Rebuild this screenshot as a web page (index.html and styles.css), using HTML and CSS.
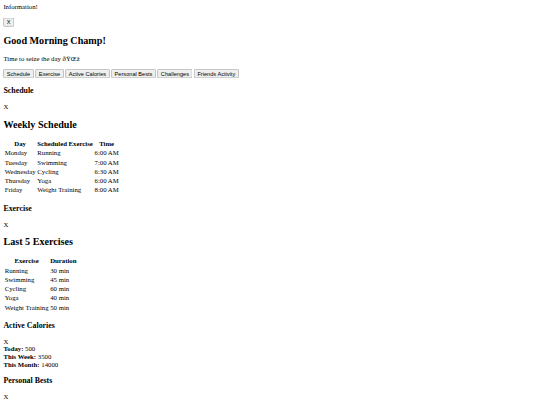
FILE: index.html
```html
<!DOCTYPE html>
<html lang="en">
<head>
  <meta charset="UTF-8">
  <meta name="viewport" content="width=device-width, initial-scale=1.0">
  <title>Fitness Dashboard</title>
  <link rel="stylesheet" href="styles.css">
</head>
<body>
  <div class="page">
    <div class="alert">
      <div>Information!</div>
      <p><button class="close">X</button></p>
    </div>

    <section class="greeting">
      <h1>Good Morning Champ!</h1>
      <p>Time to seize the day ðŸŒž</p>
    </section>

    <div class="tabs">
      <button>Schedule</button>
      <button>Exercise</button>
      <button>Active Calories</button>
      <button>Personal Bests</button>
      <button>Challenges</button>
      <button>Friends Activity</button>
    </div>

    <!-- Schedule -->
    <div class="card">
      <h3>Schedule</h3>
      <div class="close-x">X</div>
      <h2>Weekly Schedule</h2>
      <table>
        <tr><th>Day</th><th>Scheduled Exercise</th><th>Time</th></tr>
        <tr><td>Monday</td><td>Running</td><td>6:00 AM</td></tr>
        <tr><td>Tuesday</td><td>Swimming</td><td>7:00 AM</td></tr>
        <tr><td>Wednesday</td><td>Cycling</td><td>6:30 AM</td></tr>
        <tr><td>Thursday</td><td>Yoga</td><td>6:00 AM</td></tr>
        <tr><td>Friday</td><td>Weight Training</td><td>8:00 AM</td></tr>
      </table>
    </div>

    <!-- Exercise -->
    <div class="card">
      <h3>Exercise</h3>
      <div class="close-x">X</div>
      <h2>Last 5 Exercises</h2>
      <table>
        <tr><th>Exercise</th><th>Duration</th></tr>
        <tr><td>Running</td><td>30 min</td></tr>
        <tr><td>Swimming</td><td>45 min</td></tr>
        <tr><td>Cycling</td><td>60 min</td></tr>
        <tr><td>Yoga</td><td>40 min</td></tr>
        <tr><td>Weight Training</td><td>50 min</td></tr>
      </table>
    </div>

    <!-- Active Calories -->
    <div class="card">
      <h3>Active Calories</h3>
      <div class="close-x">X</div>
      <div><b>Today:</b> 500</div>
      <div><b>This Week:</b> 3500</div>
      <div><b>This Month:</b> 14000</div>
    </div>

    <!-- Personal Bests -->
    <div class="card">
      <h3>Personal Bests</h3>
      <div class="close-x">X</div>
    </div>
  </div>
</body>
</html>
```

FILE: styles.css
```css
html,
body {
  margin: 0;
  overflow: hidden;
}

body {
  font-family: "Liberation Serif", "Times New Roman", serif;
}

/* page was captured at 1280 wide and scaled down to 540 */
.page {
  width: 1264px;
  padding: 8px;
  transform: scale(0.421875);
  transform-origin: 0 0;
}

.greeting h1 {
  font-size: 1.5em;
  margin: 0.83em 0;
}

.tabs button,
.close {
  font-family: "Liberation Sans", Arial, sans-serif;
}
```
